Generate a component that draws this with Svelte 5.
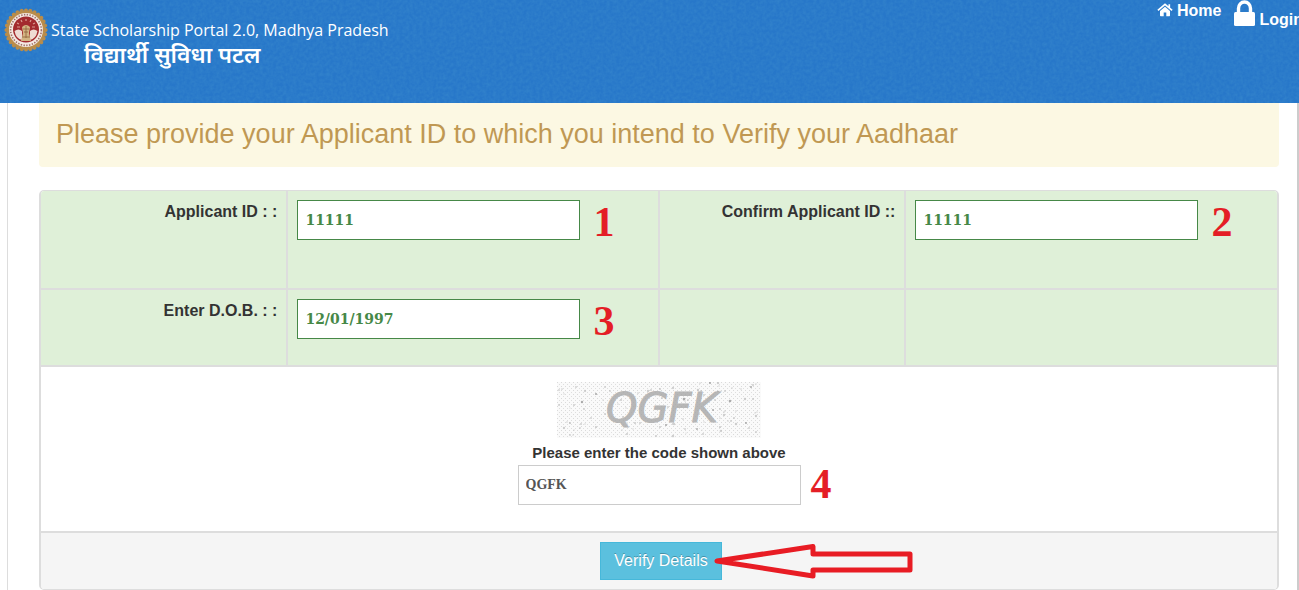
<script lang="ts">
  let applicantId = $state('11111');
  let confirmId = $state('11111');
  let dob = $state('12/01/1997');
  let code = $state('QGFK');

  let seed = 90210;
  const random = () => {
    seed = (seed * 16807) % 2147483647;
    return seed / 2147483647;
  };

  const specks = Array.from({ length: 110 }, () => ({
    x: Math.round(random() * 202),
    y: Math.round(random() * 54),
    r: 0.5 + random() * 0.8,
    tone: random() > 0.7 ? '#999' : '#c4c4c4',
  }));

  const teeth = Array.from({ length: 28 }, (_, i) => (i * 360) / 28);
</script>

<header class="topbar">
  <svg class="grain" aria-hidden="true">
    <filter id="grain">
      <feTurbulence type="fractalNoise" baseFrequency="0.3" numOctaves="2" seed="4" />
      <feColorMatrix values="0 0 0 0 0.05  0 0 0 0 0.28  0 0 0 0 0.62  0.7 0 0 0 -0.2" />
    </filter>
    <rect width="100%" height="100%" filter="url(#grain)" />
  </svg>
  <div class="brand">
    <svg class="emblem" viewBox="0 0 44 44" aria-hidden="true">
      {#each teeth as angle}
        <circle cx="22" cy="2.4" r="2" fill="#b98c4a" transform="rotate({angle} 22 22)" />
      {/each}
      <circle cx="22" cy="22" r="19.8" fill="#b98c4a" />
      <circle cx="22" cy="22" r="17" fill="#f4e9e2" />
      <circle cx="22" cy="22" r="15.4" fill="none" stroke="#a07068" stroke-width="1.6" stroke-dasharray="1.4 1.4" />
      <circle cx="22" cy="21.500" r="13" fill="#a32a2e" />
      <path d="M10.500 23q4-3 7.500 0v9q-6-1-7.500-9zM33.500 23q-4-3-7.500 0v9q6-1 7.500-9z" fill="#efdcd4" />
      <path d="M13 15l2 1M17 12l1 2M22 11v2M27 12l-1 2M31 15l-2 1M13 19h3M28 19h3" stroke="#d99a90" stroke-width="1.2" />
      <path d="M18 19q4-4 8 0l-1 6 2 8H17l2-8z" fill="#d3b483" />
      <path d="M19 21h6M20 24h4M18 29h8M22 18v12" stroke="#8e6038" stroke-width="0.8" />
    </svg>
    <div class="titles">
      <div class="title">State Scholarship Portal 2.0, Madhya Pradesh</div>
      <div class="subtitle" lang="hi">विद्यार्थी सुविधा पटल</div>
    </div>
  </div>
  <nav class="links">
    <a class="home" href="#home">
      <svg viewBox="0 0 16 14" aria-hidden="true">
        <path d="M8 3.8l5 4.300v4.400q0 .7-.7.700H9.300V9.400H6.700v3.800H3.700q-.7 0-.7-.7V8.100z" />
        <path d="M.9 7.300L8 1.300l7.100 6M12.300 1.200v3.600" fill="none" stroke="#fff" stroke-width="1.7" />
      </svg>
      Home
    </a>
    <a class="login" href="#login">
      <svg viewBox="0 0 21 26" aria-hidden="true">
        <path d="M4.500 13V8.500a6 6.500 0 0 1 12 0V13" fill="none" stroke="#fff" stroke-width="3.4" />
        <rect y="12" width="21" height="14" rx="1.5" />
      </svg>
      Login
    </a>
  </nav>
</header>

<main class="page">
  <h1 class="notice">Please provide your Applicant ID to which you intend to Verify your Aadhaar</h1>

  <form class="panel" onsubmit={(e) => e.preventDefault()}>
    <div class="row row-ids">
      <div class="cell label"><label for="applicant">Applicant ID : :</label></div>
      <div class="cell field">
        <input id="applicant" class="valid" type="text" bind:value={applicantId} />
        <span class="step">1</span>
      </div>
      <div class="cell label"><label for="confirm">Confirm Applicant ID ::</label></div>
      <div class="cell field">
        <input id="confirm" class="valid" type="text" bind:value={confirmId} />
        <span class="step">2</span>
      </div>
    </div>
    <div class="row row-dob">
      <div class="cell label"><label for="dob">Enter D.O.B. : :</label></div>
      <div class="cell field">
        <input id="dob" class="valid" type="text" bind:value={dob} />
        <span class="step">3</span>
      </div>
      <div class="cell"></div>
      <div class="cell"></div>
    </div>
    <div class="captcha">
      <svg class="captcha-image" viewBox="0 0 204 56" role="img" aria-label="Verification code">
        <defs>
          <pattern id="dots" width="4" height="4" patternUnits="userSpaceOnUse">
            <rect width="4" height="4" fill="#fafafa" />
            <rect width="1" height="1" fill="#dadada" />
            <rect x="2" y="2" width="1" height="1" fill="#dedede" />
          </pattern>
        </defs>
        <rect width="204" height="56" fill="url(#dots)" />
        {#each specks as s}
          <circle cx={s.x} cy={s.y} r={s.r} fill={s.tone} />
        {/each}
        <text x="49" y="40" class="captcha-text">QGFK</text>
        <rect width="204" height="56" fill="url(#dots)" opacity="0.2" />
      </svg>
      <label for="code">Please enter the code shown above</label>
      <div class="code">
        <input id="code" type="text" bind:value={code} />
        <span class="step step-code">4</span>
      </div>
    </div>
    <div class="actions">
      <button type="submit">Verify Details</button>
      <svg class="arrow" viewBox="0 0 204 36" aria-hidden="true">
        <path d="M5 18L101 3.500V11H198V27H101V33z" />
      </svg>
    </div>
  </form>
</main>

<style>
:global(body) {
  margin: 0;
  overflow: hidden;
  background: #fff;
  color: #333;
  font-family: "Liberation Sans", Arial, sans-serif;
  font-size: 16px;
}
.topbar {
  position: relative;
  display: flex;
  justify-content: space-between;
  height: 103px;
  overflow: hidden;
  background: #2777c9;
  color: #fff;
}
.grain {
  position: absolute;
  inset: 0;
  width: 100%;
  height: 100%;
}
.brand {
  position: relative;
  display: flex;
  align-items: flex-start;
  padding: 8px 0 0 4px;
}
.emblem {
  flex: none;
  width: 44px;
  height: 44px;
}
.titles {
  padding: 10px 0 0 3px;
  white-space: nowrap;
}
.title {
  font-family: "Comic Sans MS", "Open Sans", sans-serif;
  font-size: 16px;
  font-weight: 500;
  line-height: 24px;
}
.subtitle {
  padding-left: 33px;
  font-family: "Noto Sans", "Noto Sans Devanagari", sans-serif;
  font-size: 23px;
  font-weight: 600;
  line-height: 24px;
}
.links {
  position: relative;
  display: flex;
  align-items: flex-start;
  gap: 13px;
  margin-right: -4px;
  font-weight: bold;
  line-height: 22px;
}
.links a {
  display: flex;
  gap: 4px;
  color: #fff;
  text-decoration: none;
}
.links svg {
  flex: none;
  fill: #fff;
}
.home svg {
  width: 16px;
  height: 14px;
  margin-top: 3px;
}
.login {
  align-items: flex-end;
  height: 31px;
}
.login svg {
  width: 21px;
  height: 26px;
  margin-bottom: 5px;
}

.page {
  margin: 0 0 0 7px;
  padding: 0 18px 0 31px;
  border-left: 1px solid #ddd;
  border-right: 2px solid #ccc;
}
.notice {
  margin: 0 0 23px;
  padding: 15px 17px 17px;
  border-radius: 0 0 4px 4px;
  background: #fcf8e3;
  color: #c09853;
  font-size: 27px;
  font-weight: normal;
  line-height: 32px;
}
.panel {
  overflow: hidden;
  border: solid #ddd;
  border-width: 1px 2px;
  border-radius: 5px;
}
.row {
  display: grid;
  grid-template-columns: 245fr 371fr 246fr 372fr;
  border-bottom: 2px solid #ddd;
  background: #dff0d8;
}
.row-ids {
  min-height: 97px;
}
.row-dob {
  min-height: 75px;
}
.cell {
  padding: 9px 9px 0;
}
.cell + .cell {
  border-left: 2px solid #ddd;
}
label {
  font-weight: bold;
  line-height: 24px;
}
.label {
  text-align: right;
}
.field {
  display: flex;
  align-items: flex-start;
  gap: 13px;
}
input {
  box-sizing: border-box;
  width: 283px;
  height: 40px;
  padding: 0 7px;
  border: 1px solid #ccc;
  background: #fff;
  color: #555;
  font-family: "DejaVu Serif", serif;
  font-size: 14px;
  font-weight: bold;
}
.valid {
  border-color: #468847;
  color: #468847;
}
.step {
  color: #e41e26;
  font-family: "Liberation Serif", serif;
  font-size: 42px;
  font-weight: bold;
  line-height: 44px;
}
.captcha {
  display: flex;
  flex-direction: column;
  align-items: center;
  min-height: 149px;
  padding-top: 15px;
  border-bottom: 2px solid #ddd;
}
.captcha-image {
  width: 204px;
  height: 56px;
  margin-bottom: 3px;
}
.captcha-text {
  fill: #a6a6a6;
  stroke: #a6a6a6;
  stroke-width: 1;
  font-family: "DejaVu Sans", sans-serif;
  font-size: 40px;
  font-style: italic;
}
.captcha label {
  font-size: 15px;
}
.code {
  position: relative;
}
.step-code {
  position: absolute;
  top: 0;
  left: 100%;
  margin-left: 10px;
  line-height: 38px;
}
#code {
  font-family: "Liberation Serif", serif;
}
.actions {
  display: flex;
  justify-content: center;
  position: relative;
  padding: 9px 0 9px 4px;
  background: #f5f5f5;
}
button {
  height: 38px;
  padding: 0 13px;
  border: 1px solid #46b8da;
  background: #5bc0de;
  color: #fff;
  font-family: inherit;
  font-size: 16px;
  text-shadow: 0 -1px 0 rgba(0, 0, 0, 0.25);
}
.arrow {
  position: absolute;
  top: 10px;
  left: 50%;
  width: 204px;
  height: 36px;
  margin-left: 53px;
}
.arrow path {
  fill: none;
  stroke: #e81c24;
  stroke-width: 5;
  stroke-linejoin: round;
}
</style>
